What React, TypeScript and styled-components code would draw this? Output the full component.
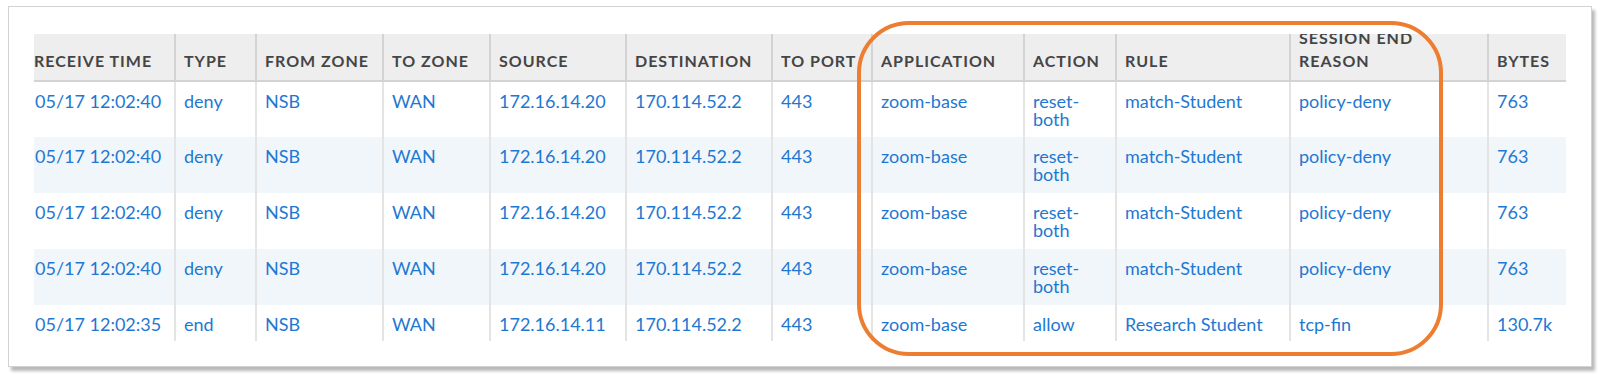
import React from 'react'
import styled, { createGlobalStyle } from 'styled-components'

const GlobalStyle = createGlobalStyle`
  html, body {
    margin: 0;
    padding: 0;
    background: #ffffff;
  }
  body {
    font-family: Lato, "Open Sans", "Liberation Sans", sans-serif;
  }
`

const Page = styled.div`
  width: 1600px;
  height: 375px;
  padding: 6px 0 0 8px;
  box-sizing: border-box;
`

const Card = styled.div`
  position: relative;
  width: 1584px;
  height: 361px;
  box-sizing: border-box;
  background: #ffffff;
  border: 1px solid #d2d2d2;
  box-shadow: 3px 4px 3px rgba(0, 0, 0, 0.28);
  padding: 27px 0 0 25px;
`

const Scroller = styled.div`
  width: 1532px;
  height: 307px;
  overflow: hidden;
`

const Table = styled.table`
  table-layout: fixed;
  border-collapse: collapse;
  width: 1532px;
`

const HeadRow = styled.tr`
  height: 46px;
  background: #eeeeee;
  border-bottom: 2px solid #d3d3d3;
`

const HeadCell = styled.th<{ $first?: boolean; $last?: boolean }>`
  height: 46px;
  padding: 0 6px 8px ${(p) => (p.$first ? '0' : '8px')};
  box-sizing: border-box;
  border-right: ${(p) => (p.$last ? 'none' : '2px solid #d3d3d3')};
  vertical-align: bottom;
  text-align: left;
  font-size: 16px;
  font-weight: 700;
  line-height: 23px;
  letter-spacing: 1px;
  color: #454545;
  text-transform: uppercase;
  white-space: normal;
  overflow: hidden;
`

const HeadClip = styled.div`
  max-height: 38px;
  display: flex;
  flex-direction: column;
  justify-content: flex-end;
  overflow: hidden;
`

const Row = styled.tr<{ $striped: boolean }>`
  height: 56px;
  background: ${(p) => (p.$striped ? '#f1f6fa' : '#ffffff')};
`

const Cell = styled.td<{ $first?: boolean; $last?: boolean }>`
  padding: 10px 8px 0 ${(p) => (p.$first ? '1px' : '8px')};
  box-sizing: border-box;
  border-right: ${(p) => (p.$last ? 'none' : '2px solid #e4e4e4')};
  vertical-align: top;
  font-size: 18px;
  line-height: 18px;
  color: #1e78d2;
  white-space: normal;
  overflow: hidden;
`

const Highlight = styled.div`
  position: absolute;
  left: 848px;
  top: 14px;
  width: 586px;
  height: 335px;
  box-sizing: border-box;
  border: 4px solid #ed7d31;
  border-radius: 52px;
  pointer-events: none;
`

const widths = [141, 81, 127, 107, 136, 146, 100, 152, 92, 174, 198, 78]

const headers = [
  'Receive Time',
  'Type',
  'From Zone',
  'To Zone',
  'Source',
  'Destination',
  'To Port',
  'Application',
  'Action',
  'Rule',
  'Session End Reason',
  'Bytes',
]

const denyRow = [
  '05/17 12:02:40',
  'deny',
  'NSB',
  'WAN',
  '172.16.14.20',
  '170.114.52.2',
  '443',
  'zoom-base',
  'reset-both',
  'match-Student',
  'policy-deny',
  '763',
]

const rows = [
  denyRow,
  denyRow,
  denyRow,
  denyRow,
  [
    '05/17 12:02:35',
    'end',
    'NSB',
    'WAN',
    '172.16.14.11',
    '170.114.52.2',
    '443',
    'zoom-base',
    'allow',
    'Research Student',
    'tcp-fin',
    '130.7k',
  ],
]

const App = () => {
  return (
    <Page>
      <GlobalStyle />
      <Card>
        <Scroller>
          <Table>
            <colgroup>
              {widths.map((w, i) => (
                <col key={i} style={{ width: w }} />
              ))}
            </colgroup>
            <thead>
              <HeadRow>
                {headers.map((h, i) => (
                  <HeadCell key={h} $first={i === 0} $last={i === headers.length - 1}>
                    <HeadClip>{h}</HeadClip>
                  </HeadCell>
                ))}
              </HeadRow>
            </thead>
            <tbody>
              {rows.map((r, ri) => (
                <Row key={ri} $striped={ri % 2 === 1}>
                  {r.map((c, ci) => (
                    <Cell key={ci} $first={ci === 0} $last={ci === r.length - 1}>
                      {c}
                    </Cell>
                  ))}
                </Row>
              ))}
            </tbody>
          </Table>
        </Scroller>
        <Highlight />
      </Card>
    </Page>
  )
}

export default App
